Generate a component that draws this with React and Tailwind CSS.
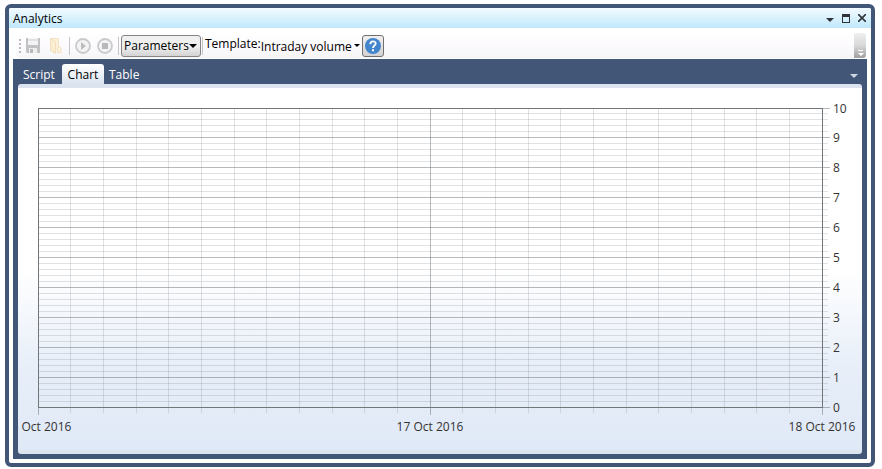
import React from "react";

const LEFT = 20;
const TOP = 20;
const WIDTH = 784;
const HEIGHT = 299;
const RIGHT = LEFT + WIDTH;
const BOTTOM = TOP + HEIGHT;

const columns = Array.from({ length: 25 }, (_, i) => ({
  x: LEFT + Math.floor((i * WIDTH) / 24) + 0.5,
  major: i % 12 === 0,
}));
const rows = Array.from({ length: 51 }, (_, i) => ({
  y: TOP + Math.floor((i * HEIGHT) / 50) + 0.5,
  major: i % 5 === 0,
  value: 10 - i / 5,
}));
const dates = ["16 Oct 2016", "17 Oct 2016", "18 Oct 2016"];

function Chart() {
  const minorX = columns.filter((c) => !c.major);
  const majorX = columns.filter((c) => c.major);
  const minorY = rows.filter((r) => !r.major);
  const majorY = rows.filter((r) => r.major);
  return (
    <svg viewBox="0 0 844 362" className="block w-full" role="img" aria-label="Intraday volume chart">
      <g shapeRendering="crispEdges" fill="none" strokeWidth="1">
        <g stroke="#707780" strokeOpacity="0.21">
          <path d={minorX.map((c) => `M${c.x} ${TOP}V${BOTTOM + 6}`).join("")} />
          <path d={minorY.map((r) => `M${LEFT} ${r.y}H${RIGHT + 6}`).join("")} />
        </g>
        <g stroke="#60686c" strokeOpacity="0.46">
          <path d={majorX.map((c) => `M${c.x} ${TOP}V${BOTTOM + 8}`).join("")} />
          <path d={majorY.map((r) => `M${LEFT} ${r.y}H${RIGHT + 8}`).join("")} />
        </g>
        <rect x={LEFT + 0.5} y={TOP + 0.5} width={WIDTH} height={HEIGHT} stroke="#70767a" />
      </g>
      <g className="fill-[#333333] text-[12px]">
        {majorY.map((r) => (
          <text key={r.value} x="815" y={Math.ceil(r.y + 4)}>
            {r.value}
          </text>
        ))}
        {dates.map((d, i) => (
          <text key={d} x={LEFT + (i * WIDTH) / 2} y="343" textAnchor="middle">
            {d}
          </text>
        ))}
      </g>
    </svg>
  );
}

function SaveIcon() {
  return (
    <svg width="16" height="16" viewBox="0 0 16 16" aria-hidden="true">
      <path fill="#c2c2c4" d="M1 0h14v15H2l-1-1z" />
      <path fill="#f3f3f4" d="M3 0h10v7H3z" />
      <path fill="#e2e2e4" d="M3 1h10v2H3z" />
      <path fill="#eeeeef" d="M4 10h8v5H4z" />
      <path fill="#b9b9bb" d="M5 11h3v4H5z" />
    </svg>
  );
}

function FolderIcon() {
  return (
    <svg width="16" height="16" viewBox="0 0 16 16" aria-hidden="true">
      <path fill="#fbf0da" stroke="#f3e2c3" d="M2.500 0.500h8v10l2 1v3h-3" />
      <path fill="#fbedd0" stroke="#f2dfbc" d="M2.500 0.500l5 3v12l-5-3z" />
      <path fill="#fdf4e2" stroke="#f2dfbc" d="M9.500 10.500l1.500-2 2 1.500v4l-2 1-1.500-1z" />
    </svg>
  );
}

function RoundIcon({ children }) {
  return (
    <svg width="16" height="16" viewBox="0 0 16 16" aria-hidden="true">
      <circle cx="8" cy="8" r="7" fill="#f4f4f5" stroke="#cacacc" strokeWidth="1.800" />
      {children}
    </svg>
  );
}

function Separator() {
  return <span className="h-[18px] w-px shrink-0 bg-[#c6c6c9]" />;
}

function DownArrow({ className }) {
  return (
    <svg width="8" height="4" viewBox="0 0 8 4" className={className} aria-hidden="true">
      <path fill="currentColor" d="M0 0h8L4 4z" />
    </svg>
  );
}

function Toolbar() {
  return (
    <div className="flex h-[31px] pt-[5px] pr-[5px] pl-[7px]">
      <div className="flex h-[25px] grow items-center rounded-l bg-linear-to-b from-white via-[#fcfafd] to-[#f5f5f6]">
        <svg width="2" height="14" viewBox="0 0 2 14" className="ml-[3px]" aria-hidden="true">
          <path fill="#bcbcc0" d="M0 0h2v2H0zM0 4h2v2H0zM0 8h2v2H0zM0 12h2v2H0z" />
        </svg>
        <button type="button" aria-label="Save" disabled className="ml-1">
          <SaveIcon />
        </button>
        <button type="button" aria-label="Open" disabled className="mr-[5px] ml-[7px]">
          <FolderIcon />
        </button>
        <Separator />
        <button type="button" aria-label="Run" disabled className="ml-[5px]">
          <RoundIcon>
            <path fill="#bdbdc0" d="M6 4l5 4-5 4z" />
          </RoundIcon>
        </button>
        <button type="button" aria-label="Stop" disabled className="mr-[5px] ml-[6px]">
          <RoundIcon>
            <path fill="#b9b9bc" d="M5 5h6v6H5z" />
          </RoundIcon>
        </button>
        <Separator />
        <button
          type="button"
          aria-haspopup="menu"
          className="ml-[2px] flex h-[22px] w-20 items-center justify-between rounded-[3px] border border-[#858585] bg-linear-to-b from-[#f0f0f0] from-50% to-[#d4d4d4] pt-px pr-[3px] pl-[2px]"
        >
          Parameters
          <DownArrow />
        </button>
        <span className="w-px" />
        <Separator />
        <label htmlFor="template" className="ml-[2px] pb-1">
          Template:
        </label>
        <span className="flex items-center">
          <select id="template" className="w-[101px] appearance-none bg-transparent pt-[2px]">
            <option>Intraday volume</option>
          </select>
          <svg width="6" height="3" viewBox="0 0 6 3" className="pointer-events-none -ml-2" aria-hidden="true">
            <path d="M0 0h6L3 3z" />
          </svg>
        </span>
        <button
          type="button"
          aria-label="Help"
          className="ml-[2px] flex h-[22px] w-[22px] items-center justify-center rounded-[3px] border border-[#707070] bg-linear-to-b from-[#f0f0f0] to-[#d2d2d2]"
        >
          <svg width="16" height="16" viewBox="0 0 16 16" aria-hidden="true">
            <circle cx="8" cy="8" r="8" fill="#4285cd" />
            <path
              fill="none"
              stroke="#ffffff"
              strokeWidth="1.800"
              d="M5.300 6.200C5.300 2.400 10.700 2.500 10.700 5.600C10.700 7.500 8 7.600 8 10"
            />
            <path fill="#ffffff" d="M7 11.300h2v2H7z" />
          </svg>
        </button>
      </div>
      <button
        type="button"
        aria-label="Toolbar options"
        className="flex h-[25px] w-[12px] items-end justify-center rounded-r-[3px] bg-linear-to-b from-[#efefef] via-[#d9d9d9] to-[#a0a0a0] pb-[2px]"
      >
        <svg width="7" height="6" viewBox="0 0 7 6" aria-hidden="true">
          <path fill="#ffffff" d="M1 0h5v1H1zM1 3h6L4 6z" />
        </svg>
      </button>
    </div>
  );
}

export default function App() {
  return (
    <div className="bg-white pt-1 pr-[7px] pb-[2px] pl-[5px] font-['Open_Sans','Noto_Sans',sans-serif] text-[12px] leading-4 text-black">
      <main className="overflow-hidden rounded-md border-4 border-[#425677] bg-white">
        <header className="flex h-5 items-center bg-linear-to-b from-[#f3fbff] to-[#bfe8fb] pr-[5px] pl-1">
          <h1 className="grow pt-[2px]">Analytics</h1>
          <div className="flex items-center text-[#2e3438]">
            <button type="button" aria-label="Window menu" className="pt-1">
              <DownArrow />
            </button>
            <button type="button" aria-label="Maximize" className="ml-2">
              <svg width="8" height="9" viewBox="0 0 8 9" aria-hidden="true">
                <path fill="currentColor" fillRule="evenodd" d="M0 0h8v9H0zM1 3v5h6V3z" />
              </svg>
            </button>
            <button type="button" aria-label="Close" className="ml-2">
              <svg width="8" height="8" viewBox="0 0 8 8" aria-hidden="true">
                <path stroke="currentColor" strokeWidth="1.600" d="M0 0l8 8M8 0L0 8" />
              </svg>
            </button>
          </div>
        </header>
        <Toolbar />
        <section className="mx-1 mb-1 bg-[#425677] p-[5px]">
          <nav role="tablist" className="flex h-5 items-center text-white">
            <button type="button" role="tab" aria-selected="false" className="w-11 pt-[2px] pl-[5px] text-left">
              Script
            </button>
            <button
              type="button"
              role="tab"
              aria-selected="true"
              className="h-5 w-[42px] rounded-t-[3px] bg-linear-to-b from-white to-[#dbe3ee] pt-[2px] text-black"
            >
              Chart
            </button>
            <button type="button" role="tab" aria-selected="false" className="pt-[2px] pl-[5px]">
              Table
            </button>
            <button type="button" aria-label="Tab list" className="mr-1 ml-auto pt-1 text-[#ced6e2]">
              <DownArrow />
            </button>
          </nav>
          <div className="overflow-hidden rounded-[3px] border-y-4 border-[#dbe3ee] bg-linear-to-b from-white from-50% via-[#e7eef8] via-78% to-[#e0e9f7]">
            <Chart />
          </div>
        </section>
      </main>
    </div>
  );
}
